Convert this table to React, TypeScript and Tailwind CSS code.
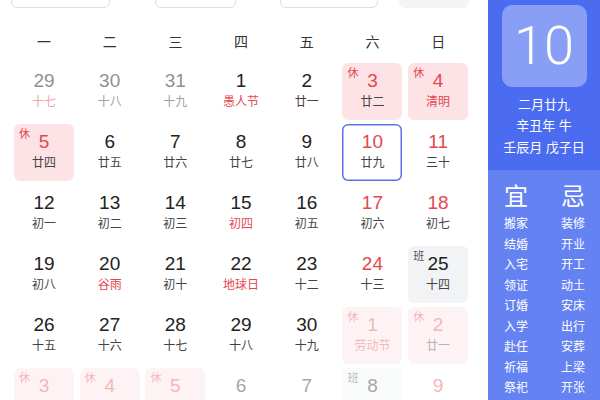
import React from "react";

type Cell = {
  n: number;
  l: string;
  tag?: "休" | "班";
  numRed?: boolean;
  lunarRed?: boolean;
  faded?: boolean;
  prev?: boolean;
  selected?: boolean;
};

const rows: Cell[][] = [
  [
    { n: 29, l: "十七", prev: true, lunarRed: true },
    { n: 30, l: "十八", prev: true },
    { n: 31, l: "十九", prev: true },
    { n: 1, l: "愚人节", lunarRed: true },
    { n: 2, l: "廿一" },
    { n: 3, l: "廿二", tag: "休", numRed: true },
    { n: 4, l: "清明", tag: "休", numRed: true, lunarRed: true },
  ],
  [
    { n: 5, l: "廿四", tag: "休", numRed: true },
    { n: 6, l: "廿五" },
    { n: 7, l: "廿六" },
    { n: 8, l: "廿七" },
    { n: 9, l: "廿八" },
    { n: 10, l: "廿九", numRed: true, selected: true },
    { n: 11, l: "三十", numRed: true },
  ],
  [
    { n: 12, l: "初一" },
    { n: 13, l: "初二" },
    { n: 14, l: "初三" },
    { n: 15, l: "初四", lunarRed: true },
    { n: 16, l: "初五" },
    { n: 17, l: "初六", numRed: true },
    { n: 18, l: "初七", numRed: true },
  ],
  [
    { n: 19, l: "初八" },
    { n: 20, l: "谷雨", lunarRed: true },
    { n: 21, l: "初十" },
    { n: 22, l: "地球日", lunarRed: true },
    { n: 23, l: "十二" },
    { n: 24, l: "十三", numRed: true },
    { n: 25, l: "十四", tag: "班" },
  ],
  [
    { n: 26, l: "十五" },
    { n: 27, l: "十六" },
    { n: 28, l: "十七" },
    { n: 29, l: "十八" },
    { n: 30, l: "十九" },
    { n: 1, l: "劳动节", tag: "休", numRed: true, lunarRed: true, faded: true },
    { n: 2, l: "廿一", tag: "休", numRed: true, faded: true },
  ],
  [
    { n: 3, l: "廿二", tag: "休", numRed: true, faded: true },
    { n: 4, l: "廿三", tag: "休", numRed: true, faded: true },
    { n: 5, l: "立夏", tag: "休", numRed: true, faded: true },
    { n: 6, l: "廿五", faded: true },
    { n: 7, l: "廿六", faded: true },
    { n: 8, l: "廿七", tag: "班", faded: true },
    { n: 9, l: "廿八", numRed: true, faded: true },
  ],
];

const weekdays = ["一", "二", "三", "四", "五", "六", "日"];
const yi = ["搬家", "结婚", "入宅", "领证", "订婚", "入学", "赴任", "祈福", "祭祀"];
const ji = ["装修", "开业", "开工", "动土", "安床", "出行", "安葬", "上梁", "开张"];

function DayCell({ c }: { c: Cell }) {
  const bg =
    c.tag === "休" ? "bg-[#fde3e5]" : c.tag === "班" ? "bg-[#f2f3f5]" : "bg-transparent";
  const op = c.faded ? "opacity-40" : c.prev ? "opacity-50" : "";
  const ring = c.selected ? "ring-[1.5px] ring-inset ring-[#5a72e6]" : "";
  return (
    <div className={`relative h-[57px] rounded-md ${bg} ${op} ${ring} flex flex-col items-center pt-[7px]`}>
      {c.tag && (
        <span
          className={`absolute left-[5px] top-[3px] text-[11px] leading-[14px] ${
            c.tag === "休" ? "text-[#e5474f]" : "text-[#555]"
          }`}
        >
          {c.tag}
        </span>
      )}
      <div
        className={`text-[19px] leading-[22px] ${c.numRed ? "text-[#e5474f]" : "text-[#222]"}`}
      >
        {c.n}
      </div>
      <div
        className={`mt-[2px] text-[12px] leading-[16px] ${
          c.lunarRed ? "text-[#e5474f]" : "text-[#444]"
        }`}
      >
        {c.l}
      </div>
    </div>
  );
}

export default function App() {
  return (
    <div
      className="w-[600px] h-[400px] overflow-hidden flex bg-white"
      style={{ fontFamily: '"Liberation Sans","Noto Sans CJK SC",sans-serif' }}
    >
      <div className="w-[488px] h-[400px] shrink-0">
        <div className="h-[8px] overflow-hidden flex items-end">
          <div className="ml-[11px] w-[99px] h-[30px] shrink-0 border border-[#dcdfe6] rounded-md" />
          <div className="w-[45px] h-[30px] shrink-0 flex items-center justify-center text-[13px] text-[#555]">年</div>
          <div className="w-[81px] h-[30px] shrink-0 border border-[#dcdfe6] rounded-md" />
          <div className="w-[44px] h-[30px] shrink-0 flex items-center justify-center text-[13px] text-[#555]">月</div>
          <div className="w-[98px] h-[30px] shrink-0 border border-[#dcdfe6] rounded-md" />
          <div className="ml-[21px] w-[70px] h-[30px] shrink-0 bg-[#f3f4f6] rounded-md" />
        </div>
        <div className="mt-[24px] ml-[14px] grid grid-cols-[repeat(7,60px)] gap-x-[5.7px]">
          {weekdays.map((w) => (
            <div key={w} className="h-[20px] text-center text-[14px] leading-[20px] text-[#333]">
              {w}
            </div>
          ))}
        </div>
        <div className="mt-[11px] ml-[14px] grid grid-cols-[repeat(7,60px)] gap-x-[5.7px] gap-y-[4px]">
          {rows.flat().map((c, i) => (
            <DayCell key={i} c={c} />
          ))}
        </div>
      </div>
      <div className="w-[112px] h-[400px] shrink-0 flex flex-col text-white">
        <div className="h-[170px] bg-[#4b6cf0] flex flex-col items-center pt-[5px]">
          <div className="w-[85px] h-[82px] rounded-[10px] bg-white/35 flex items-center justify-center">
            <span
              className="text-[54px] leading-none font-light"
              style={{ fontFamily: 'Roboto,"Liberation Sans",sans-serif' }}
            >
              10
            </span>
          </div>
          <div className="mt-[7px] text-[13px] leading-[21px] text-center">二月廿九</div>
          <div className="text-[13px] leading-[22px] text-center">辛丑年 牛</div>
          <div className="text-[13px] leading-[21px] text-center">壬辰月 戊子日</div>
        </div>
        <div className="flex-1 bg-[#6482f2] pt-[13px] pl-[4px] grid grid-cols-[48px_48px] gap-x-[9px] content-start">
          <div className="flex flex-col items-center">
            <div className="text-[24px] leading-[28px] mb-[3px]">宜</div>
            {yi.map((t) => (
              <div key={t} className="text-[12px] leading-[20.5px]">{t}</div>
            ))}
          </div>
          <div className="flex flex-col items-center">
            <div className="text-[24px] leading-[28px] mb-[3px]">忌</div>
            {ji.map((t) => (
              <div key={t} className="text-[12px] leading-[20.5px]">{t}</div>
            ))}
          </div>
        </div>
      </div>
    </div>
  );
}
